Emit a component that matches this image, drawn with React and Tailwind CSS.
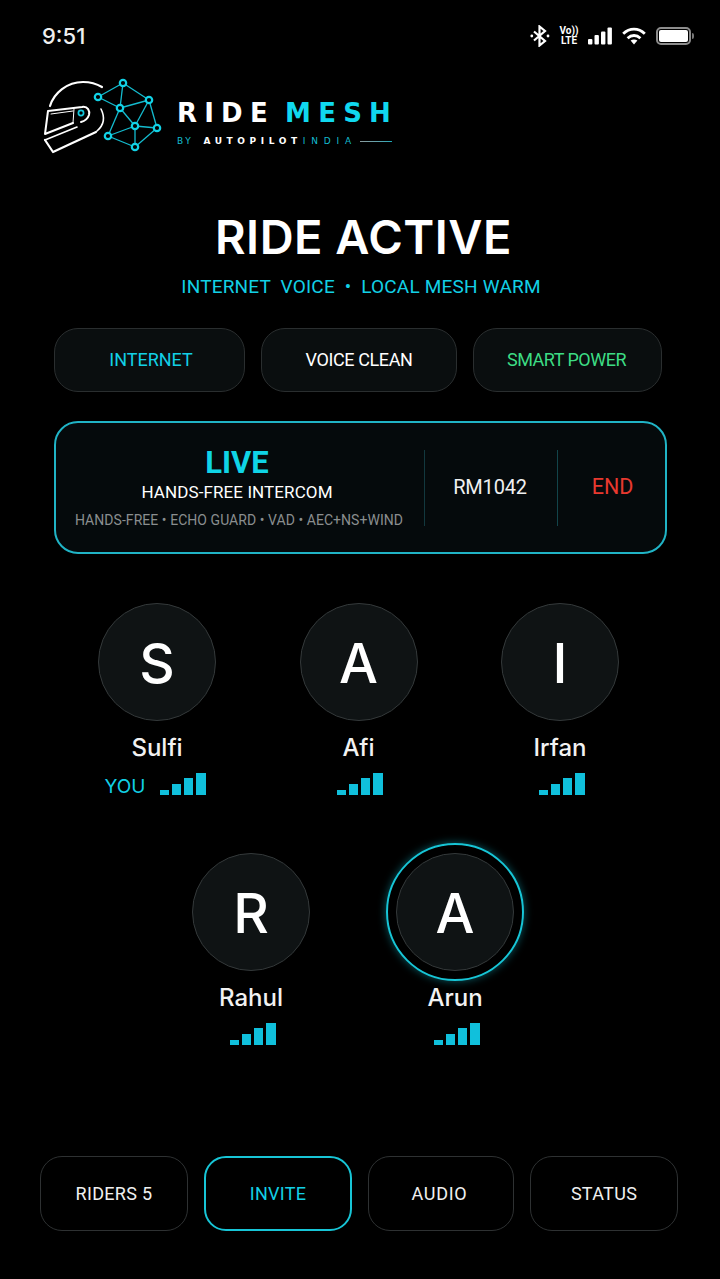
import React from 'react';

const sans = "font-['Inter','Liberation_Sans',sans-serif]";

const StatusIcons = () => (
  <div className="flex items-center gap-[10px]">
    <svg width="20" height="22" viewBox="0 0 20 22" fill="none" stroke="white" strokeWidth="2.2">
      <path d="M4 6.5 15 16 9.5 20.5V1.5L15 6 4 15.5" />
      <circle cx="1.8" cy="11" r="1.4" fill="white" stroke="none" />
      <circle cx="18" cy="11" r="1.4" fill="white" stroke="none" />
    </svg>
    <div className="flex w-[18px] flex-col items-center font-['Roboto',sans-serif] text-[10px] leading-[10px] font-bold text-white">
      <span>Vo))</span>
      <span>LTE</span>
    </div>
    <svg width="24" height="18" viewBox="0 0 24 18" fill="white">
      <rect x="0" y="12" width="4.4" height="5.5" rx="1" />
      <rect x="6.5" y="8" width="4.4" height="9.5" rx="1" />
      <rect x="13" y="4.5" width="4.4" height="13" rx="1" />
      <rect x="19.5" y="0.5" width="4.4" height="17" rx="1" />
    </svg>
    <svg width="24" height="18" viewBox="0 0 24 18" fill="none" stroke="white" strokeWidth="2.8">
      <path d="M1.2 6.8C7.5 .6 16.5 .6 22.8 6.8" />
      <path d="M5.6 11.2c3.8-3.6 9-3.6 12.8 0" />
      <path d="M8.6 13.6c2-1.6 4.8-1.6 6.8 0L12 17.4Z" fill="white" stroke="none" />
    </svg>
    <div className="flex items-center gap-[1px]">
      <div className="flex h-[18px] w-[35px] items-center rounded-[5px] border-2 border-[#8d8d8d] p-[1px]">
        <div className="h-full w-full rounded-[2px] bg-white" />
      </div>
      <div className="h-[6px] w-[2px] rounded-r-sm bg-[#777]" />
    </div>
  </div>
);

const nodes = [
  [121, 82], [96, 96], [147, 99], [118, 107], [133, 125], [155, 127], [106, 135], [133, 146],
];
const links = [
  [0, 1], [0, 2], [0, 3], [1, 3], [2, 3], [2, 4], [2, 5], [3, 4], [3, 6], [4, 5], [4, 6], [4, 7], [5, 7], [6, 7],
];

const Logo = () => (
  <div className="flex items-start">
    <svg width="122" height="78" viewBox="40 77 122 78" fill="none" className="shrink-0">
      <g stroke="white" strokeLinecap="round" strokeLinejoin="round">
        <path d="M48 105C52 92 65 81 81 81c7 0 14 2 19 5" strokeWidth="2.2" />
        <path d="M46 110 80 106c6-1 8 4 7 8-1 3-4 6-8 7M71 122 43 133l3-23" strokeWidth="2" />
        <path d="M72 108 71 122M49 113 71 110" strokeWidth="1" />
        <path d="M43 139 51 151 94 131" strokeWidth="2.2" />
        <path d="M43 139 75 126" strokeWidth="1.6" />
        <path d="M99 108c4 8 3 16-4 22" strokeWidth="1.6" />
      </g>
      <circle cx="79" cy="112" r="2.6" stroke="#12c8dc" strokeWidth="1.7" />
      <g stroke="#14bccf" strokeWidth="1.3">
        {links.map(([a, b]) => (
          <line key={`${a}-${b}`} x1={nodes[a][0]} y1={nodes[a][1]} x2={nodes[b][0]} y2={nodes[b][1]} />
        ))}
      </g>
      {nodes.map(([x, y]) => (
        <circle key={x + y} cx={x} cy={y} r="3.2" fill="#000" stroke="#12d2e6" strokeWidth="2.2" />
      ))}
    </svg>
    <div className="mt-[21px] ml-[13px] font-['DejaVu_Sans',sans-serif]">
      <div className="text-[26px] leading-[28px] font-bold tracking-[7.2px] whitespace-nowrap [word-spacing:-6px]">
        <span className="text-white">RIDE </span>
        <span className="text-[#10d8ef]">MESH</span>
      </div>
      <div className="mt-[7px] flex items-center text-[9px] leading-[14px] whitespace-nowrap">
        <span className="tracking-[2.6px] text-[#14bccf]">BY</span>
        <span className="ml-[10px] font-bold tracking-[4.6px] text-white">AUTOPILOT</span>
        <span className="ml-[1px] tracking-[5.8px] text-[#14bccf]">INDIA</span>
        <span className="ml-[3px] h-[1px] w-[32px] bg-gradient-to-r from-[#8a9a9c] to-[#14a8b8]" />
      </div>
    </div>
  </div>
);

const StatusPill = ({ label, className }) => (
  <div className={`flex h-[64px] items-center justify-center rounded-[24px] border border-[#2a2e2f] bg-[#0a0e0f] pb-[2px] text-[18px] ${className}`}>
    {label}
  </div>
);

const Bars = () => (
  <div className="flex h-[22px] items-end gap-[3px]">
    <div className="h-[5px] w-[9px] bg-[#10c0dc]" />
    <div className="h-[11px] w-[9px] bg-[#10c0dc]" />
    <div className="h-[17px] w-[9px] bg-[#10c0dc]" />
    <div className="h-[22px] w-[10px] bg-[#10c0dc]" />
  </div>
);

const Rider = ({ letter, name, you, speaking }) => (
  <div className="relative flex w-[118px] flex-col items-center">
    {speaking && (
      <div className="absolute top-[-10px] left-[-10px] h-[138px] w-[138px] rounded-full border-2 border-[#17c5d6] shadow-[0_0_8px_rgba(20,200,220,0.45)]" />
    )}
    <div className="flex h-[118px] w-[118px] items-center justify-center rounded-full border border-[#34393a] bg-[#0f1314] pt-[3px] text-[55px] leading-none font-medium text-white">
      {letter}
    </div>
    <div className="mt-[12px] text-[24px] leading-[29px] font-medium text-[#f2f2f2]">{name}</div>
    <div className={`mt-[11px] flex items-end gap-[15px] ${you ? 'mr-[3px]' : 'ml-[3px]'}`}>
      {you && <span className="text-[19px] leading-[17px] text-[#12d0e6]">YOU</span>}
      <Bars />
    </div>
  </div>
);

const NavButton = ({ label, active, className }) => (
  <div
    className={`flex h-[75px] items-center justify-center rounded-[22px] border text-[18px] tracking-[0.3px] ${className} ${
      active ? 'border-2 border-[#17c5d6] text-[#12d0e6]' : 'border-[#2e3132] text-[#f0f0f0]'
    }`}
  >
    {label}
  </div>
);

export default function App() {
  return (
    <div className={`flex h-[1279px] w-[720px] flex-col overflow-hidden bg-black text-white ${sans}`}>
      {/* status bar */}
      <div className="flex items-center justify-between pt-[23px] pr-[26px] pl-[42px]">
        <span className="text-[22px] leading-[26px] font-medium text-[#efefef]">9:51</span>
        <StatusIcons />
      </div>

      <div className="mt-[29px] pl-[42px]">
        <Logo />
      </div>

      {/* heading */}
      <div className="mt-[53px] flex flex-col items-center pl-[7px]">
        <h1 className="text-[47px] leading-[56px] font-semibold tracking-[0.5px] text-white">RIDE ACTIVE</h1>
        <p className="mt-[10px] mr-[5px] font-['Roboto',sans-serif] text-[19px] leading-[24px] tracking-[0.2px] whitespace-pre text-[#12d0e6]">
          INTERNET  VOICE  •  LOCAL MESH WARM
        </p>
      </div>

      <div className="mt-[29px] flex gap-[16px] pl-[54px] font-['Roboto',sans-serif]">
        <StatusPill label="INTERNET" className="w-[191px] pl-[3px] text-[#12d0e6]" />
        <StatusPill label="VOICE CLEAN" className="w-[196px] tracking-[-0.4px] text-white" />
        <StatusPill label="SMART POWER" className="w-[189px] pr-[2px] tracking-[-0.5px] text-[#3ddc84]" />
      </div>

      {/* live card */}
      <div className="mt-[29px] ml-[54px] flex h-[133px] w-[613px] items-center rounded-[24px] border-2 border-[#20b4c6] bg-[#050a0c] font-['Roboto',sans-serif]">
        <div className="flex h-[76px] w-[369px] flex-col items-center justify-center border-r border-[#12383e] pb-[3px]">
          <div className="mr-[6px] text-[31px] leading-[36px] font-bold text-[#0fd4e6]">LIVE</div>
          <div className="mt-[1px] mr-[6px] text-[17px] leading-[20px] tracking-[0.1px] text-white">HANDS-FREE INTERCOM</div>
          <div className="mt-[10px] mr-[2px] text-[14px] leading-[16px] tracking-[0.05px] text-[#8a8e8f]">
            HANDS-FREE • ECHO GUARD • VAD • AEC+NS+WIND
          </div>
        </div>
        <div className="flex h-[76px] w-[133px] items-center justify-center border-r border-[#12444a] pr-[2px] pb-[1px] text-[20px] tracking-[-0.2px] text-[#f0f0f0]">
          RM1042
        </div>
        <div className="flex flex-1 items-center justify-center pl-[2px] text-[21.5px] text-[#e8392f]">END</div>
      </div>

      {/* riders */}
      <div className="mt-[49px] ml-[98px] flex gap-[83.5px]">
        <Rider letter="S" name="Sulfi" you />
        <Rider letter="A" name="Afi" />
        <Rider letter="I" name="Irfan" />
      </div>
      <div className="mt-[58px] ml-[192px] flex gap-[86px]">
        <Rider letter="R" name="Rahul" />
        <Rider letter="A" name="Arun" speaking />
      </div>

      {/* bottom nav */}
      <div className="mt-auto mb-[48px] flex gap-[16px] pl-[40px] font-['Roboto',sans-serif]">
        <NavButton label="RIDERS 5" className="w-[148px]" />
        <NavButton label="INVITE" active className="w-[148px]" />
        <NavButton label="AUDIO" className="w-[146px] pr-[3px] tracking-[0.7px]" />
        <NavButton label="STATUS" className="w-[148px]" />
      </div>
    </div>
  );
}
